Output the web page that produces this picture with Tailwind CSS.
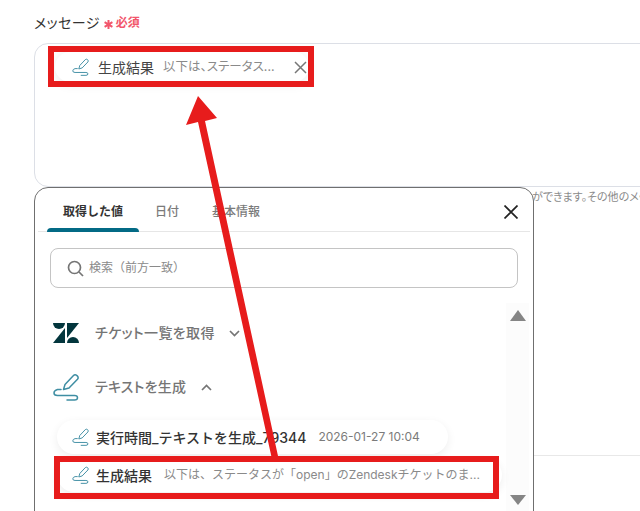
<!DOCTYPE html>
<html lang="ja">
<head>
    <meta charset="UTF-8">
    <title>メッセージ</title>
    <script src="https://cdn.jsdelivr.net/npm/@tailwindcss/browser@4"></script>
</head>
<body class="bg-white overflow-hidden font-['Inter','Noto_Sans_CJK_JP',sans-serif]">
    <svg width="0" height="0" class="absolute">
        <symbol id="pen" viewBox="0 0 26 28">
            <g fill="none" stroke="#3f8ea3" stroke-width="1.500" stroke-linecap="round" stroke-linejoin="round">
                <path d="M10.500 16.500 L12 11.500 L20.500 2.500 Q22 1 24 2.600 Q26 4.500 24.500 6.200 L16 15 Z"/>
                <path d="M8 16.500 H4.500 Q1 17.500 1 20 Q1 22.500 4.500 22.500 H21.500 Q24.500 22.500 24.500 24.700 Q24.500 27 21.500 27 H14"/>
            </g>
        </symbol>
    </svg>

    <div class="relative w-[640px] h-[511px] overflow-hidden">
        <!-- Message field -->
        <div class="pl-[34px] pt-[14px]">
            <div class="flex items-center h-[18px] text-[14px] leading-[18px] text-[#333]">
                <span class="[font-feature-settings:'palt'] tracking-[0.4px]">メッセージ</span>
                <svg class="ml-[4px] w-[9px] h-[9px] mt-[2px]" viewBox="0 0 9 9" stroke="#f2556b" stroke-width="2"><path d="M4.500 0 V9 M0.600 2.200 L8.400 6.800 M8.400 2.200 L0.600 6.800"/></svg>
                <span class="ml-[3px] text-[12px] font-bold text-[#f2556b]">必須</span>
            </div>
            <div class="mt-[11px] w-[640px] h-[144px] border border-[#dcdfe6] rounded-[14px] pt-[8px] pl-[20px]">
                <div class="flex items-center w-[254px] h-[30px] rounded-full shadow-[0_2px_12px_rgba(0,0,0,0.08)] pl-[17px]">
                    <svg class="w-[17px] h-[18px] shrink-0"><use href="#pen"/></svg>
                    <span class="ml-[9px] text-[14px] text-[#444]">生成結果</span>
                    <span class="ml-[9px] text-[12.500px] text-[#8a8a8a] whitespace-nowrap [font-feature-settings:'palt']">以下は、ステータス...</span>
                    <svg class="ml-auto mr-[2px] w-[13px] h-[13px] shrink-0" viewBox="0 0 13 13"><path d="M1 1 L12 12 M12 1 L1 12" stroke="#777" stroke-width="1.500"/></svg>
                </div>
            </div>
            <p class="mt-[2px] pl-[498px] whitespace-nowrap text-[11px] leading-[16px] text-[#8a8a8a] [font-feature-settings:'palt']">ができます。その他のメッセージ</p>
        </div>

        <!-- Value picker popup -->
        <div class="absolute left-[34px] top-[187px] w-[500px] h-[340px] bg-white border border-[#6f6f6f] rounded-[14px] px-[3px]">
            <div class="relative flex h-[44px] border-b border-[#e6e6e6] text-[12px] font-medium">
                <div class="w-[92px] ml-[9px] pt-[15px] text-center text-[#333] font-bold relative">
                    取得した値
                    <span class="absolute left-0 right-0 bottom-[-1px] h-[4px] bg-[#036a85] rounded-t-[4px]"></span>
                </div>
                <div class="ml-[16px] pt-[15px] text-[#7b7b7b]">日付</div>
                <div class="ml-[33px] pt-[15px] text-[#7b7b7b]">基本情報</div>
                <svg class="absolute right-[12px] top-[17px] w-[14px] h-[14px]" viewBox="0 0 14 14"><path d="M0.500 0.500 L13.500 13.500 M13.500 0.500 L0.500 13.500" stroke="#222" stroke-width="1.700"/></svg>
            </div>
            <div class="mt-[16px] ml-[12px] w-[468px] h-[40px] border border-[#c4c4c4] rounded-[8px] flex items-center pl-[16px]">
                <svg class="w-[17px] h-[17px]" viewBox="0 0 17 17" fill="none" stroke="#757575" stroke-width="1.700"><circle cx="7.500" cy="7.500" r="6"/><path d="M12 12 L16 16"/></svg>
                <span class="ml-[5px] text-[12px] text-[#8a8a8a]">検索（前方一致）</span>
            </div>

            <div class="relative mt-[17px] h-[220px]">
                <div class="absolute right-[1px] top-[-2px] w-[23px] h-[222px] bg-[#fcfcfc] flex flex-col items-center justify-between pt-[7px] pb-[20px]">
                    <span class="w-0 h-0 border-x-[8px] border-x-transparent border-b-[11px] border-b-[#858585]"></span>
                    <span class="w-0 h-0 border-x-[8px] border-x-transparent border-t-[10px] border-t-[#858585]"></span>
                </div>

                <div class="flex items-center h-[20px] absolute left-[15px] top-[18px]">
                    <svg class="w-[26px] h-[20px]" viewBox="0 0 26 20" fill="#03363d">
                        <path d="M12 5 V20 H0 Z"/><path d="M12 0 A6 6 0 0 1 0 0 Z"/>
                        <path d="M14 15 V0 H26 Z"/><path d="M14 20 A6 6 0 0 1 26 20 Z"/>
                    </svg>
                    <span class="ml-[16px] mb-[2px] text-[14px] font-medium text-[#757575] [font-feature-settings:'palt'] tracking-[0.35px]">チケット一覧を取得</span>
                    <svg class="ml-[14px] w-[11px] h-[7px]" viewBox="0 0 11 7" fill="none" stroke="#757575" stroke-width="1.700"><path d="M1 1 L5.500 5.500 L10 1"/></svg>
                </div>
                <div class="flex items-center h-[30px] absolute left-[15px] top-[67px]">
                    <svg class="w-[26px] h-[28px]"><use href="#pen"/></svg>
                    <span class="ml-[16px] mb-[2px] text-[14px] font-medium text-[#757575] [font-feature-settings:'palt'] tracking-[0.2px]">テキストを生成</span>
                    <svg class="ml-[15px] w-[11px] h-[7px]" viewBox="0 0 11 7" fill="none" stroke="#757575" stroke-width="1.700"><path d="M1 6 L5.500 1.500 L10 6"/></svg>
                </div>

                <div class="absolute left-[19px] top-[115px] w-[391px] h-[34px] bg-white rounded-full shadow-[0_3px_10px_rgba(0,0,0,0.07)] flex items-center pl-[15px]">
                    <svg class="w-[17px] h-[18px]"><use href="#pen"/></svg>
                    <span class="ml-[7px] text-[14px] font-medium text-[#333] whitespace-nowrap">実行時間_テキストを生成_79344</span>
                    <span class="ml-[12px] text-[12px] text-[#7b7b7b] whitespace-nowrap">2026-01-27 10:04</span>
                </div>
                <div class="absolute left-[19px] top-[153px] w-[445px] h-[34px] bg-white rounded-full shadow-[0_3px_10px_rgba(0,0,0,0.07)] flex items-center pl-[15px]">
                    <svg class="w-[17px] h-[18px]"><use href="#pen"/></svg>
                    <span class="ml-[7px] text-[14px] font-medium text-[#333]">生成結果</span>
                    <span class="ml-[12px] text-[12px] text-[#8a8a8a] whitespace-nowrap">以下は、ステータスが「open」のZendeskチケットのま...</span>
                </div>
            </div>
        </div>

        <!-- Faint divider right of the popup -->
        <div class="absolute left-[534px] top-[455px] w-[106px] h-px bg-[#e8e8e8]"></div>

        <!-- Annotations -->
        <div class="absolute left-[48px] top-[46px] w-[266px] h-[41px] border-[6px] border-[#e71c1c]"></div>
        <div class="absolute left-[54px] top-[456px] w-[445px] h-[43px] border-[6px] border-[#e71c1c]"></div>
        <svg class="absolute left-0 top-0" width="640" height="511" viewBox="0 0 640 511">
            <path d="M271.500 457 L278 456 L205 121 L217 118 L198 96 L186 125 L198 122 Z" fill="#e71c1c"/>
        </svg>
    </div>
</body>
</html>
